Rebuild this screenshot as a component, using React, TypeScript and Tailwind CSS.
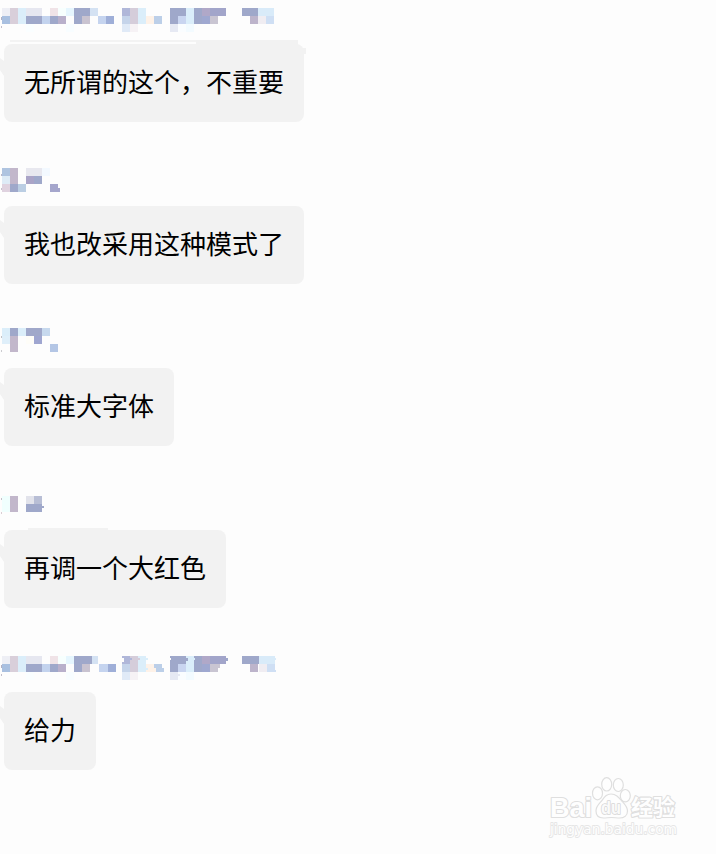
import React from 'react';

// [x, y, width, height, fill]
type Block = [number, number, number, number, string];

const longName: Block[] = [
  [2, 0, 8, 8, '#eeeff5'], [10, 0, 8, 16, '#d9cfda'], [18, 0, 8, 16, '#dbeefa'], [26, 0, 16, 8, '#e6e7f0'],
  [50, 0, 8, 8, '#f0e3e7'], [58, 0, 8, 8, '#f7fffe'], [66, 0, 8, 8, '#e6f6fe'], [74, 0, 16, 8, '#9fa8ca'],
  [90, 0, 8, 8, '#d4e2f3'], [2, 8, 8, 8, '#a9c0e0'], [26, 8, 16, 8, '#9fa8ca'], [42, 8, 8, 8, '#c3d3ee'],
  [50, 8, 8, 8, '#9fa8ca'], [58, 8, 8, 8, '#b9b0cb'], [74, 8, 8, 8, '#9fa8ca'], [82, 8, 8, 8, '#c9c3d0'],
  [98, 8, 8, 8, '#c5d4ef'], [106, 8, 8, 8, '#9fafd8'],
  [122, 0, 8, 8, '#b0b7d9'], [130, 0, 8, 16, '#d5cdda'], [138, 0, 8, 16, '#dbeefa'], [122, 8, 8, 8, '#c5d4ea'],
  [146, 8, 8, 8, '#fef2e8'], [154, 8, 8, 8, '#bccfe8'],
  [170, 0, 16, 8, '#9fa8ca'], [186, 0, 8, 16, '#dbeefa'], [194, 0, 8, 16, '#9fa8ca'], [202, 0, 8, 8, '#b0a8c8'],
  [210, 0, 16, 8, '#a2a5ca'], [170, 8, 8, 8, '#9fa8ca'], [178, 8, 8, 8, '#c9d5f0'], [202, 8, 8, 8, '#9fa8d0'],
  [210, 8, 8, 8, '#c9c5d2'],
  [242, 0, 16, 8, '#9fa8ca'], [258, 0, 16, 8, '#d9ebf9'], [250, 8, 8, 8, '#bdb4cb'], [258, 8, 8, 8, '#f0edf2'],
  [266, 8, 8, 8, '#cfdff4'],
  [26, 16, 8, 8, '#fafeff'], [66, 16, 8, 8, '#f8fdff'], [122, 16, 8, 8, '#e0eaf7'], [130, 16, 8, 8, '#f6f2f5'],
  [170, 16, 8, 8, '#e6e9f3'], [178, 16, 8, 8, '#fafdff'], [186, 16, 8, 8, '#f3fbff'],
  [1, 9, 1, 3, '#b4b1c2'], [1, 18, 1, 2, '#c3bfcb'],
];

// same name, with slightly ragged right-hand blocks
const raggedName: Block[] = [
  ...longName.map(([x, y, w, h, c]): Block => [(x >= 98 && x < 122) || x >= 258 ? x + 1 : x, y, w, h, c]),
  [90, 0, 2, 8, '#9fa8ca'], [106, 8, 2, 8, '#c5d4ef'], [114, 8, 2, 8, '#9fafd8'],
  [122, 2, 2, 4, '#fdfdfd'], [130, 2, 2, 2, '#b0b7d9'], [138, 2, 2, 2, '#d5cdda'],
  [146, 2, 2, 2, '#dbeefa'], [146, 12, 2, 2, '#dbeefa'], [154, 12, 2, 4, '#fef2e8'], [162, 12, 2, 4, '#bccfe8'],
  [170, 2, 1, 2, '#fdfdfd'], [186, 2, 2, 3, '#9fa8ca'], [194, 2, 1, 2, '#dbeefa'], [226, 2, 2, 3, '#9fa8ca'],
  [218, 8, 2, 4, '#c9c5d2'], [178, 18, 2, 2, '#e6e9f3'], [258, 0, 1, 8, '#9fa8ca'], [274, 2, 2, 2, '#d9ebf9'],
  [274, 14, 2, 2, '#cfdff4'],
];

const messages: { text: string; top: number; width: string; blocks: Block[]; extra?: Block[] }[] = [
  {
    text: '无所谓的这个，不重要',
    top: 8,
    width: 'w-[300px]',
    blocks: longName,
    extra: [[10, 40, 288, 2, '#f3f3f3'], [196, 40, 102, 5, '#f2f2f2'], [280, 48, 26, 6, '#f2f2f2'], [290, 54, 14, 5, '#f2f2f2']],
  },
  {
    text: '我也改采用这种模式了',
    top: 6,
    width: 'w-[300px]',
    blocks: [
      [2, 0, 8, 8, '#afc4e0'], [10, 0, 8, 16, '#c2b7cb'], [2, 8, 8, 8, '#deebf6'], [2, 16, 8, 8, '#dfd2df'],
      [10, 16, 8, 8, '#9fa8ca'], [18, 16, 8, 8, '#bbcee3'], [26, 0, 16, 8, '#e8e8ef'], [42, 0, 8, 8, '#f3f9ff'],
      [26, 8, 8, 8, '#aaa4c7'], [34, 8, 8, 8, '#9fa8ca'], [50, 16, 8, 8, '#a5a6cc'], [58, 20, 2, 4, '#a5a6cc'],
      [1, 6, 1, 2, '#bcb9c9'], [1, 20, 1, 2, '#c8c2ce'],
    ],
  },
  {
    text: '标准大字体',
    top: 4,
    width: 'w-[170px]',
    blocks: [
      [2, 0, 8, 8, '#dbeefa'], [10, 0, 8, 8, '#9fa8ca'], [18, 0, 8, 8, '#dbeefa'], [26, 0, 16, 8, '#a0a8ca'],
      [42, 0, 8, 8, '#c7d9ee'], [2, 8, 8, 8, '#dfeffa'], [10, 8, 8, 16, '#c2b7cb'], [26, 8, 8, 8, '#fefdf8'],
      [34, 8, 8, 8, '#9fa6d0'], [50, 16, 8, 8, '#b4c6e5'], [1, 8, 1, 2, '#c2c2c6'], [1, 22, 1, 2, '#cbcbcf'],
    ],
  },
  {
    text: '再调一个大红色',
    top: 10,
    width: 'w-[222px]',
    blocks: [
      [2, 0, 8, 16, '#f0fffe'], [10, 0, 8, 16, '#c2b7cb'], [26, 0, 8, 8, '#e2e3eb'], [34, 0, 8, 8, '#b8bed5'],
      [26, 8, 16, 8, '#9fa8ca'], [42, 10, 2, 2, '#9fa8ca'], [1, 2, 1, 2, '#c5c1ca'], [1, 16, 1, 2, '#d9cdd3'],
    ],
    extra: [[28, 42, 80, 3, '#f2f2f2']],
  },
  { text: '给力', top: 8, width: 'w-[92px]', blocks: raggedName },
];

function Name({ blocks, top, extra = [] }: { blocks: Block[]; top: number; extra?: Block[] }) {
  return (
    <svg width="320" height="44" className="block overflow-visible" shapeRendering="crispEdges" aria-hidden="true">
      {blocks.map(([x, y, w, h, fill], i) => (
        <rect key={i} x={x} y={y + top} width={w} height={h} fill={fill} />
      ))}
      {extra.map(([x, y, w, h, fill], i) => (
        <rect key={i} x={x} y={y} width={w} height={h} fill={fill} />
      ))}
    </svg>
  );
}

function Watermark() {
  return (
    <svg
      width="140"
      height="70"
      viewBox="545 772 140 70"
      className="absolute left-[545px] top-[772px]"
      fill="#fefefe"
      stroke="#dfdfdf"
      strokeWidth="1.2"
      strokeLinejoin="round"
    >
      <g fontWeight="bold" paintOrder="stroke" strokeWidth="2.2">
        <text x="550" y="817" fontSize="28" fontFamily="'Liberation Sans', Arial, sans-serif" textLength="42" lengthAdjust="spacingAndGlyphs">Bai</text>
        <text x="631" y="815" fontSize="22" fontFamily="'Noto Sans CJK SC', sans-serif" textLength="44">经验</text>
      </g>
      <ellipse cx="597.5" cy="793.3" rx="5" ry="6.5" />
      <ellipse cx="606.7" cy="784.3" rx="5" ry="6.7" />
      <ellipse cx="618.3" cy="785" rx="5" ry="6.5" />
      <ellipse cx="625.3" cy="795.7" rx="5" ry="6.2" />
      <path d="M611 794c-4.500 0-6.500 3-9 6.500c-3 3.500-6 5.500-6 10.500c0 4.500 3 7 7.500 7c3 0 5-.5 8-.5s5 .5 8 .5c4.500 0 8-2.500 8-7c0-4.500-3-7-6-10.500c-3-3.500-5.500-6.500-10.500-6.500z" />
      <text x="601" y="814" fontSize="18" fontWeight="bold" fontFamily="'Liberation Sans', Arial, sans-serif" fill="#fafafa" stroke="#d6d6d6" strokeWidth="1.6" paintOrder="stroke" textLength="20" lengthAdjust="spacingAndGlyphs">
        du
      </text>
      <text x="550" y="834" fontSize="14" fontFamily="'DejaVu Sans', sans-serif" stroke="#e6e6e6" strokeWidth="1.8" paintOrder="stroke" textLength="127" lengthAdjust="spacingAndGlyphs">
        jingyan.baidu.com
      </text>
    </svg>
  );
}

export default function App() {
  return (
    <div className="relative h-[854px] w-[716px] overflow-hidden bg-[#fdfdfd]">
      <main className="flex flex-col gap-10">
        {messages.map((m) => (
          <section key={m.text}>
            <Name blocks={m.blocks} top={m.top} extra={m.extra} />
            <div className="flex">
              <svg width="4" height="34" className="shrink-0" aria-hidden="true">
                <path d="M0 14L4 17V32L0 26z" fill="#f2f2f2" />
              </svg>
              <div className={`${m.width} flex h-[78px] items-center rounded-lg bg-[#f2f2f2] pb-1 pl-5`}>
                <p className="whitespace-nowrap font-['Noto_Sans_CJK_SC',sans-serif] text-[26px] leading-[38px] text-black">
                  {m.text}
                </p>
              </div>
            </div>
          </section>
        ))}
      </main>
      <Watermark />
    </div>
  );
}
